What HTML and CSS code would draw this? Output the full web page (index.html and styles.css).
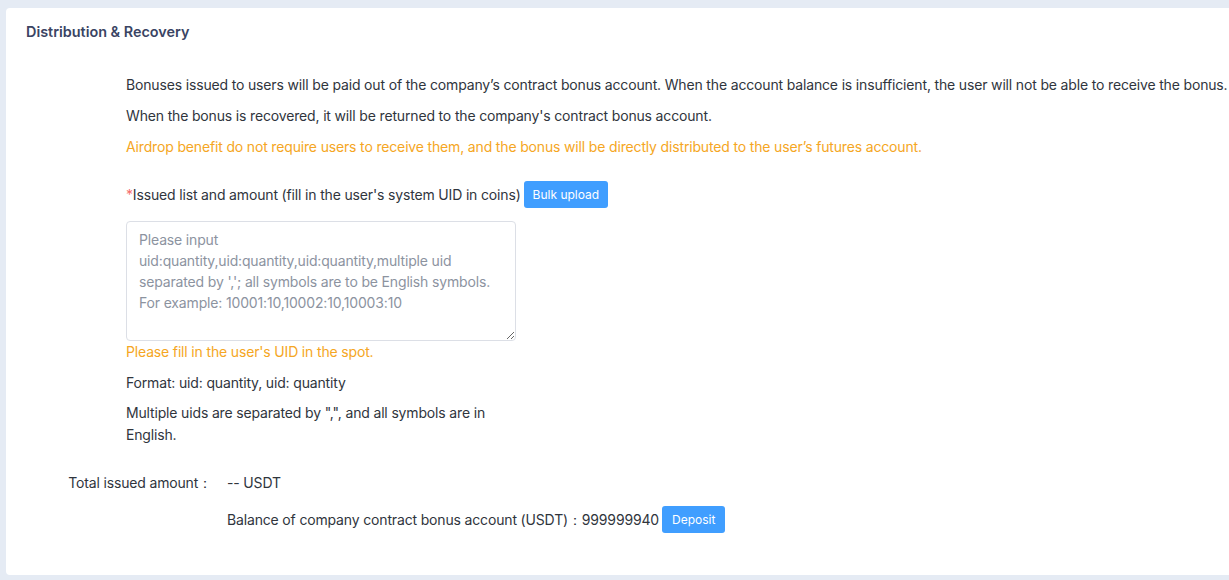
FILE: index.html
```html
<!DOCTYPE html>
<html lang="en">
<head>
<meta charset="utf-8">
<title>Distribution &amp; Recovery</title>
<link rel="stylesheet" href="styles.css">
</head>
<body>
<div class="card">
  <h2 class="title">Distribution &amp; Recovery</h2>
  <div class="notes">
    <p class="line">Bonuses issued to users will be paid out of the company’s contract bonus account. When the account balance is insufficient, the user will not be able to receive the bonus.</p>
    <p class="line">When the bonus is recovered, it will be returned to the company's contract bonus account.</p>
    <p class="line warn">Airdrop benefit do not require users to receive them, and the bonus will be directly distributed to the user’s futures account.</p>
  </div>
  <div class="issue">
    <div class="issue-label"><span class="req">*</span>Issued list and amount (fill in the user's system UID in coins)<button class="btn">Bulk upload</button></div>
    <textarea class="uids" placeholder="Please input uid:quantity,uid:quantity,uid:quantity,multiple uid separated by ','; all symbols are to be English symbols. For example: 10001:10,10002:10,10003:10"></textarea>
    <p class="hint warn">Please fill in the user's UID in the spot.</p>
    <p class="hint fmt">Format: uid: quantity, uid: quantity</p>
    <p class="hint multi">Multiple uids are separated by ",", and all symbols are in English.</p>
  </div>
  <div class="row total">
    <span class="row-label">Total issued amount：</span>
    <span class="row-value">-- USDT</span>
  </div>
  <div class="row balance">
    <span class="row-label"></span>
    <span class="row-value">Balance of company contract bonus account (USDT)：999999940<button class="btn dep">Deposit</button></span>
  </div>
</div>
</body>
</html>
```
FILE: styles.css
```css
html, body {
  margin: 0;
  padding: 0;
}
body {
  background: #e5ebf4;
  font-family: Inter, "Noto Sans", "Liberation Sans", sans-serif;
  font-size: 14px;
  letter-spacing: -0.16px;
  color: #30353d;
  overflow: hidden;
  height: 580px;
}
.card {
  margin: 8px -20px 0 6px;
  height: 567px;
  box-sizing: border-box;
  background: #fff;
  border-radius: 4px;
  padding: 14px 20px 0 20px;
}
.title {
  margin: 0;
  font-size: 14.4px;
  line-height: 20px;
  font-weight: 600;
  letter-spacing: 0;
  color: #3a4463;
}
.notes {
  margin: 32px 0 0 100px;
}
.line {
  margin: 0 0 10px;
  line-height: 21px;
  white-space: nowrap;
}
.warn {
  color: #f5a623;
}
.issue {
  margin: 24px 0 0 100px;
  width: 390px;
}
.issue-label {
  display: flex;
  align-items: center;
  white-space: nowrap;
  line-height: 27px;
}
.req {
  color: #f56c6c;
}
.btn {
  border: none;
  background: #409eff;
  color: #fff;
  font-family: inherit;
  font-size: 12px;
  letter-spacing: 0;
  height: 27px;
  padding: 0 9px;
  border-radius: 3px;
  margin-left: 3px;
}
.uids {
  display: block;
  margin-top: 13px;
  width: 390px;
  height: 120px;
  box-sizing: border-box;
  border: 1px solid #dcdfe6;
  border-radius: 4px;
  padding: 7px 12px;
  font-family: inherit;
  font-size: 14px;
  letter-spacing: -0.16px;
  line-height: 21px;
  color: #30353d;
  resize: vertical;
}
.uids::placeholder {
  color: #8c939f;
}
.hint {
  margin: 0;
  line-height: 22px;
}
.fmt {
  margin-top: 9px;
}
.multi {
  margin-top: 8px;
}
.row {
  display: flex;
  align-items: center;
  line-height: 22px;
}
.total {
  margin-top: 26px;
}
.balance {
  margin-top: 12px;
}
.row-label {
  width: 186px;
  text-align: right;
  flex-shrink: 0;
}
.row-value {
  margin-left: 15px;
  display: flex;
  align-items: center;
  white-space: nowrap;
}
.dep {
  margin-left: 3px;
  padding: 0 10px;
}
```
